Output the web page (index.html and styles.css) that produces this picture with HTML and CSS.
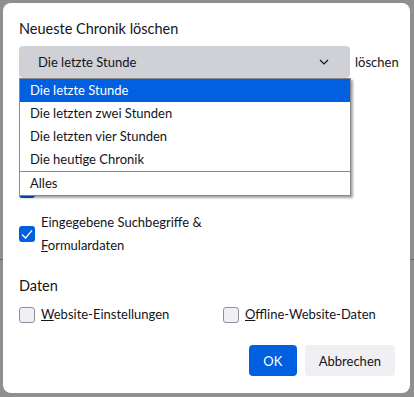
FILE: index.html
```html
<!DOCTYPE html>
<html lang="de">
<head>
    <meta charset="UTF-8">
    <meta name="viewport" content="width=device-width, initial-scale=1.0">
    <title>Neueste Chronik löschen</title>
    <link rel="stylesheet" href="styles.css">
</head>
<body>
    <div class="dialog">
        <h1 class="dialog-title">Neueste Chronik löschen</h1>

        <div class="span-row">
            <div class="select">
                <span>Die letzte Stunde</span>
                <svg class="chevron" width="12" height="12" viewBox="0 0 12 12">
                    <path d="M2 4 L6 8 L10 4" fill="none" stroke="#15141a" stroke-width="1.2"/>
                </svg>
            </div>
            <span class="span-label">löschen</span>

            <ul class="popup">
                <li class="popup-item active">Die letzte Stunde</li>
                <li class="popup-item">Die letzten zwei Stunden</li>
                <li class="popup-item">Die letzten vier Stunden</li>
                <li class="popup-item">Die heutige Chronik</li>
                <li class="popup-sep"></li>
                <li class="popup-item">Alles</li>
            </ul>
        </div>

        <h2 class="section-title hidden-title">Chronik</h2>
        <div class="check-row">
            <span class="box checked"></span>
            <label><u>B</u>esuchte Seiten &amp; Download-Chronik</label>
        </div>
        <div class="check-row">
            <span class="box checked"></span>
            <label><u>C</u>ookies</label>
        </div>
        <div class="check-row">
            <span class="box checked"></span>
            <label>Aktive Logi<u>n</u>s und Cache</label>
        </div>
        <div class="check-row two-line">
            <span class="box checked"></span>
            <label>Eingegebene Suchbegriffe &amp;<br><u>F</u>ormulardaten</label>
        </div>

        <h2 class="section-title">Daten</h2>
        <div class="data-grid">
            <div class="check-row">
                <span class="box"></span>
                <label><u>W</u>ebsite-Einstellungen</label>
            </div>
            <div class="check-row">
                <span class="box"></span>
                <label><u>O</u>ffline-Website-Daten</label>
            </div>
        </div>

        <div class="buttons">
            <button class="btn btn-primary">OK</button>
            <button class="btn">Abbrechen</button>
        </div>
    </div>
</body>
</html>
```

FILE: styles.css
```css
:root {
    --text: #15141a;
    --blue: #0060df;
    --select-bg: #d0d0d7;
    --button-bg: #f0f0f4;
    --backdrop: #8f8f8f;
}

* {
    margin: 0;
    padding: 0;
    box-sizing: border-box;
}

body {
    font-family: Lato, "Noto Sans", sans-serif;
    font-size: 13px;
    color: var(--text);
    background: var(--backdrop);
    background-image:
        linear-gradient(to bottom, transparent 259px, #3c6fa8 259px, #3c6fa8 260px, transparent 260px);
    height: 397px;
    overflow: hidden;
    padding: 3px 4px 4px 3px;
}

.dialog {
    background: #fff;
    border-radius: 8px;
    height: 390px;
    padding: 16px 15px 16px 16px;
    display: flex;
    flex-direction: column;
}

.dialog-title {
    font-size: 14.5px;
    font-weight: 400;
    line-height: 20px;
    margin-bottom: 7px;
}

.span-row {
    position: relative;
    display: flex;
    align-items: center;
    gap: 5px;
}

.select {
    flex-shrink: 0;
    width: 331px;
    height: 32px;
    background: var(--select-bg);
    border-radius: 4px;
    padding: 0 20px 0 19px;
    display: flex;
    align-items: center;
    justify-content: space-between;
}

.popup {
    position: absolute;
    top: 32px;
    left: 0;
    width: 332px;
    list-style: none;
    background: #fff;
    border: 1px solid #8a8a8a;
    box-shadow: 2px 2px 2px rgba(0, 0, 0, 0.35);
    z-index: 2;
}

.popup-item {
    height: 23px;
    line-height: 23px;
    padding-left: 10px;
}

.popup-item.active {
    background: var(--blue);
    color: #fff;
}

.popup-sep {
    height: 1px;
    background: #8a8a8a;
}

.section-title {
    font-size: 14.5px;
    font-weight: 400;
    line-height: 20px;
}

.hidden-title {
    margin: 11px 0 3px;
}

.check-row {
    display: flex;
    align-items: center;
    gap: 6px;
    padding: 4px 0;
}

.check-row.two-line {
    margin-top: 2px;
}

.check-row label {
    line-height: 23px;
}

.box {
    width: 16px;
    height: 16px;
    flex-shrink: 0;
    border: 1px solid #8f8f9d;
    border-radius: 3px;
    background: var(--button-bg);
}

.box.checked {
    border: none;
    background-color: var(--blue);
    background-image: url("data:image/svg+xml;utf8,<svg xmlns='http://www.w3.org/2000/svg' viewBox='0 0 16 16'><path d='M3 8.5 L6.5 12 L13 4.5' fill='none' stroke='white' stroke-width='1.2'/></svg>");
}

.check-row + .section-title {
    margin-top: 15px;
}

.data-grid {
    display: grid;
    grid-template-columns: 204px 1fr;
    margin-top: 3px;
}

.buttons {
    display: flex;
    justify-content: flex-end;
    gap: 8px;
    margin-top: 15px;
}

.btn {
    font-family: inherit;
    font-size: 13px;
    color: var(--text);
    background: var(--button-bg);
    border: none;
    border-radius: 4px;
    height: 31px;
    padding: 0 14px;
}

.btn-primary {
    background: var(--blue);
    color: #fff;
    width: 48px;
    padding: 0;
}
```
